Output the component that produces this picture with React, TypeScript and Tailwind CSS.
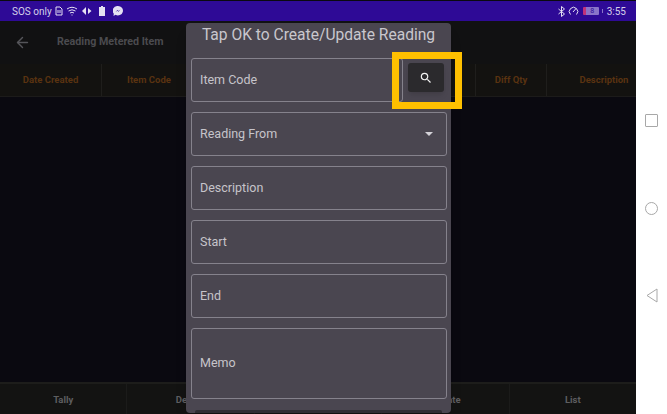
import React from "react";
import { ArrowLeft } from "lucide-react";

const columns = [
  { name: "Date Created", width: "w-[102px]" },
  { name: "Item Code", width: "w-[95px]" },
  { name: "Reading From", width: "w-[95px]" },
  { name: "Start", width: "w-[92px]" },
  { name: "End Qty", width: "w-[92px]" },
  { name: "Diff Qty", width: "w-[71px]" },
  { name: "Description", width: "w-[114px]" },
];

const tabs = ["Tally", "Details", "Add", "Update", "List"];

function StatusBar() {
  return (
    <div className="h-[20px] bg-[#2e0a96] flex items-center justify-between pl-[12px] pr-[10px] text-[#d5d0ea] text-[10px] shrink-0">
      <div className="flex items-center gap-[3px]">
        <span>SOS only</span>
        <svg width="8" height="10" viewBox="0 0 8 10" fill="none" stroke="#e4e0f2" strokeWidth="1">
          <path d="M1 1h4l2 2v6H1z" />
          <path d="M3 4v3M5 4v3" />
        </svg>
        <svg width="12" height="10" viewBox="0 0 12 10" fill="none" stroke="#e4e0f2" strokeWidth="1">
          <path d="M1 3q5-3.500 10 0M2.500 5q3.500-2.500 7 0M4 7q2-1.500 4 0M5.500 9h1" />
        </svg>
        <svg width="10" height="8" viewBox="0 0 10 8" fill="#e4e0f2" className="ml-[1px]">
          <path d="M4 0L0 4l4 4zM6 1v6l3.500-3z" />
        </svg>
        <svg width="6" height="10" viewBox="0 0 6 10" fill="#e4e0f2" className="ml-[4px]">
          <path d="M2 0h2v1h2v9H0V1h2z" />
        </svg>
        <svg width="10" height="10" viewBox="0 0 10 10" className="ml-[5px]">
          <path d="M5 0a5 4.700 0 1 1-2.500 8.800L0.500 10l.3-2.300A5 4.700 0 0 1 5 0z" fill="#e4e0f2" />
          <path d="M2.500 6l2-2 1 1 2-1.500-2 2.300-1-1z" fill="#2e0a96" />
        </svg>
      </div>
      <div className="flex items-center gap-[3px]">
        <svg width="7" height="11" viewBox="0 0 7 11" fill="none" stroke="#e4e0f2" strokeWidth="1">
          <path d="M0.500 3l6 5-3 2.500v-10l3 2.500-6 5" />
        </svg>
        <svg width="11" height="10" viewBox="0 0 11 10" fill="none" stroke="#e4e0f2" strokeWidth="1">
          <path d="M2.500 8.500a4.200 4.200 0 1 1 6 0M5 6l3-3.500" />
        </svg>
        <div className="w-[16px] h-[8px] bg-[#8a74c8] rounded-[1px] flex items-center justify-center ml-[1px] text-[7px] leading-none text-[#2e0a96] border-l-[3px] border-[#c0327a]">
          8
        </div>
        <div className="w-[1px] h-[4px] bg-[#8a74c8]" />
        <span className="ml-[1px]">3:55</span>
      </div>
    </div>
  );
}

function Field({ label, height, dropdown }: { label: string; height: string; dropdown?: boolean }) {
  return (
    <div className={`${height} w-[256px] border border-[#85828c] rounded-[3px] flex items-center justify-between pl-[8px] pr-[13px] text-[12.5px] text-[#c6c4ca]`}>
      <span>{label}</span>
      {dropdown && <div className="w-0 h-0 border-x-[4px] border-x-transparent border-t-[4px] border-t-[#d4d2d8]" />}
    </div>
  );
}

function ReadingDialog() {
  return (
    <div className="absolute left-[186px] top-[23px] w-[265px] h-[390px] bg-[#4a4650] rounded-[4px] px-[5px] shadow-lg overflow-hidden">
      <div className="h-[24px] flex items-center justify-center text-[15.6px] text-[#c9c7cd] pt-[1px]">
        Tap OK to Create/Update Reading
      </div>
      <div className="flex flex-col gap-[10px] mt-[11px]">
        <div className="flex items-start">
          <div className="h-[44px] w-[212px] border border-[#85828c] rounded-[3px] flex items-center pl-[8px] text-[12.5px] text-[#c6c4ca]">
            Item Code
          </div>
          <div className="ml-[5px] mt-[5px] w-[36px] h-[29px] bg-[#2b2a2d] rounded-[3px] flex items-center justify-center shadow-md">
            <svg width="14" height="14" viewBox="0 0 24 24" fill="#f2f2f2">
              <path d="M15.500 14h-.79l-.28-.27A6.471 6.471 0 0 0 16 9.500 6.500 6.500 0 1 0 9.500 16c1.610 0 3.090-.59 4.230-1.570l.27.28v.79l5 4.990L20.490 19l-4.990-5zm-6 0C7.010 14 5 11.990 5 9.500S7.010 5 9.500 5 14 7.010 14 9.500 11.990 14 9.500 14z" />
            </svg>
          </div>
        </div>
        <Field label="Reading From" height="h-[44px]" dropdown />
        <Field label="Description" height="h-[44px]" />
        <Field label="Start" height="h-[44px]" />
        <Field label="End" height="h-[44px]" />
        <Field label="Memo" height="h-[71px]" />
        <div className="h-[4px] mt-[1px] mx-[4px] bg-[#2f2d33] rounded-t-[2px]" />
      </div>
    </div>
  );
}

export default function App() {
  return (
    <div className="relative w-[667px] h-[414px] bg-white flex overflow-hidden font-['Roboto',sans-serif]">
      <div className="w-[636px] h-[414px] shrink-0 flex flex-col bg-[#0a0910] pt-[1px]">
        <StatusBar />
        <div className="h-[43px] bg-[#111112] flex items-center pl-[14px] shrink-0">
          <ArrowLeft size={17} color="#55555a" />
          <span className="ml-[26px] text-[10.7px] font-bold text-[#4b4b4f]">Reading Metered Item</span>
        </div>
        <div className="h-[33px] bg-[#131210] flex border-b border-[#1c1b1a] shrink-0 overflow-hidden">
          {columns.map((c) => (
            <div
              key={c.name}
              className={`${c.width} shrink-0 flex items-center justify-center border-r border-[#1f1e1c] last:border-r-0 text-[9.5px] font-bold text-[#5a3310]`}
            >
              {c.name}
            </div>
          ))}
        </div>
        <div className="flex-1" />
        <div className="h-[32px] bg-[#131312] flex border-t-[2px] border-[#1d1d1b] shrink-0">
          {tabs.map((t) => (
            <div
              key={t}
              className="flex-1 flex items-center justify-center border-r border-[#1b1b1a] last:border-r-0 text-[9.5px] font-bold text-[#5e5e60] pt-[2px]"
            >
              {t}
            </div>
          ))}
        </div>
      </div>

      <div className="flex-1 flex flex-col items-center pt-[114px] gap-[75px]">
        <div className="w-[13px] h-[13px] border border-[#a8a8a8] rounded-[1px]" />
        <div className="w-[13px] h-[13px] border border-[#a8a8a8] rounded-full" />
        <svg width="12" height="15" viewBox="0 0 12 15" fill="none" stroke="#a8a8a8" strokeWidth="1" className="-mt-[2px]">
          <path d="M11 1v13L1 7.500z" />
        </svg>
      </div>

      <ReadingDialog />

      <div className="absolute left-[392px] top-[52px] w-[70px] h-[57px] border-[7px] border-[#ffc000]" />
    </div>
  );
}
